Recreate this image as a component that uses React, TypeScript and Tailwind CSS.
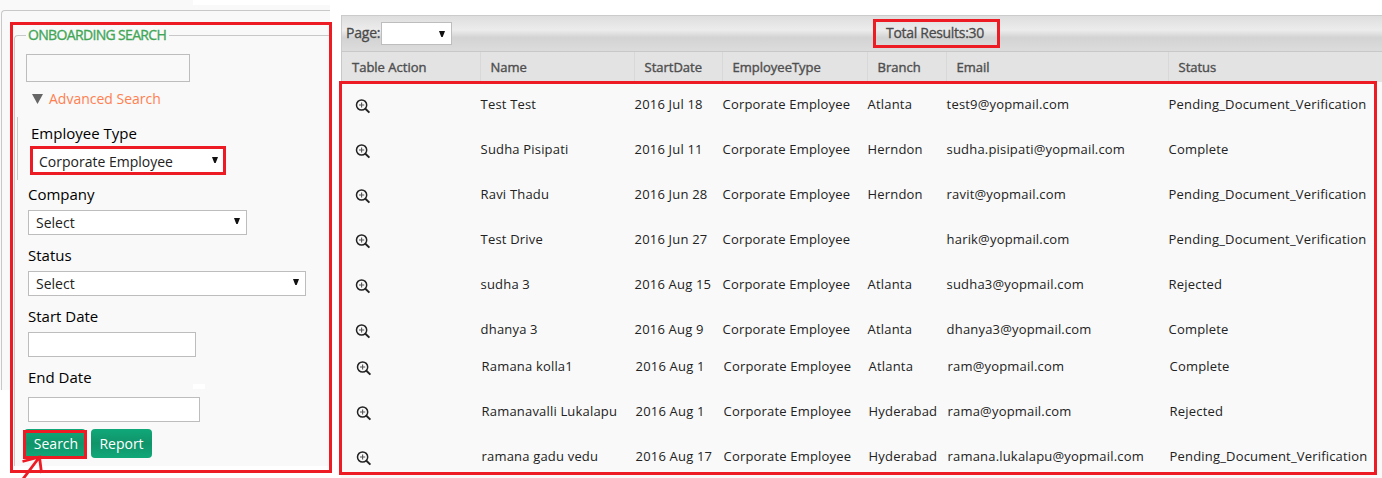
import React from "react";

type Row = {
  name: string;
  date: string;
  branch: string;
  email: string;
  status: string;
  height: string;
  offset?: string;
};

const rows: Row[] = [
  { name: "Test Test", date: "2016 Jul 18", branch: "Atlanta", email: "test9@yopmail.com", status: "Pending_Document_Verification", height: "h-[45px]" },
  { name: "Sudha Pisipati", date: "2016 Jul 11", branch: "Herndon", email: "sudha.pisipati@yopmail.com", status: "Complete", height: "h-[45px]" },
  { name: "Ravi Thadu", date: "2016 Jun 28", branch: "Herndon", email: "ravit@yopmail.com", status: "Pending_Document_Verification", height: "h-[45px]" },
  { name: "Test Drive", date: "2016 Jun 27", branch: "", email: "harik@yopmail.com", status: "Pending_Document_Verification", height: "h-[45px]" },
  { name: "sudha 3", date: "2016 Aug 15", branch: "Atlanta", email: "sudha3@yopmail.com", status: "Rejected", height: "h-[45px]" },
  { name: "dhanya 3", date: "2016 Aug 9", branch: "Atlanta", email: "dhanya3@yopmail.com", status: "Complete", height: "h-[37px]" },
  { name: "Ramana kolla1", date: "2016 Aug 1", branch: "Atlanta", email: "ram@yopmail.com", status: "Complete", height: "h-[45px]", offset: "pl-px" },
  { name: "Ramanavalli Lukalapu", date: "2016 Aug 1", branch: "Hyderabad", email: "rama@yopmail.com", status: "Rejected", height: "h-[45px]", offset: "pl-px" },
  { name: "ramana gadu vedu", date: "2016 Aug 17", branch: "Hyderabad", email: "ramana.lukalapu@yopmail.com", status: "Pending_Document_Verification", height: "h-[45px]", offset: "pl-px" },
];

const columns = "grid grid-cols-[139px_154px_88px_145px_79px_222px_214px]";
const headers = ["Table Action", "Name", "StartDate", "EmployeeType", "Branch", "Email", "Status"];

function Arrow({ className = "" }: { className?: string }) {
  return (
    <svg className={`shrink-0 ${className}`} width="6" height="6" viewBox="0 0 6 6" fill="#111">
      <path d="M0 0H6L3.7 6H2.3Z" />
    </svg>
  );
}

function ZoomIcon() {
  return (
    <svg width="16" height="16" viewBox="0 0 16 16" fill="none" stroke="#222">
      <circle cx="6.6" cy="6" r="5.1" strokeWidth="1.5" />
      <path d="M10.4 9.8L14.4 13.6" strokeWidth="2" />
      <path d="M4 6H9.2M6.6 3.4V8.6" stroke="#555" strokeWidth="1.1" />
    </svg>
  );
}

function Label({ children }: { children: React.ReactNode }) {
  return <div className="h-5 text-[15px] leading-[18px] text-black">{children}</div>;
}

function Select({ className }: { className: string }) {
  return (
    <div className={`flex h-[25px] items-center justify-between border border-[#bdbdbd] bg-white pr-[6px] pl-[7px] text-sm text-[#222] ${className}`}>
      <span className="leading-5">Select</span>
      <Arrow className="mb-[3px]" />
    </div>
  );
}

function SearchPanel() {
  return (
    <aside className="relative h-[478px] w-[341px] shrink-0">
      <div className="absolute top-0 left-0 h-[390px] w-[330px] bg-[#f9f9f9]" />
      <div className="absolute top-0 left-[193px] h-[5px] w-[148px] bg-white" />
      <div className="absolute top-[10px] left-px h-[380px] w-[329px] rounded-tl border-t border-l border-[#c8c8c8]" />
      <section className="relative ml-[14px] h-[466px] w-[316px] pt-[35px]">
        <div className="h-[431px] rounded-tl border-t border-l border-[#c8c8c8] bg-[#f9f9f9] pl-[13px]">
          <h2 className="-mt-[11px] -ml-[2px] h-5 w-[143px] bg-[#f9f9f9] pl-[2px] text-[14px] leading-5 tracking-[-0.66px] whitespace-nowrap text-[#43a657] [-webkit-text-stroke:0.35px_#43a657]">
            ONBOARDING SEARCH
          </h2>
          <div className="mt-[9px] -ml-[2px] h-[28px] w-[164px] border border-[#bdbdbd]" />
          <div className="mt-[7px] ml-[4px] flex h-5 items-center text-sm text-[#ff7f50]">
            <svg className="mr-[6px]" width="11" height="10" viewBox="0 0 11 10" fill="#666">
              <path d="M0 0H11L5.5 10Z" />
            </svg>
            <span>Advanced Search</span>
          </div>
          <div className="mt-[8px] -ml-[11px] h-[63px] border-l border-[#c8c8c8] pt-[7px] pl-[13px]">
            <Label>Employee Type</Label>
            <div className="mt-[2px] -ml-px flex h-[29px] w-[196px] items-center justify-between border-[3px] border-[#ed1c24] bg-white pr-[5px] pl-[6px] text-sm text-[#222]">
              <span className="pt-[2px] leading-5">Corporate Employee</span>
              <Arrow className="mb-px" />
            </div>
          </div>
          <div className="mt-[5px]"><Label>Company</Label></div>
          <Select className="mt-[5px] w-[219px]" />
          <div className="mt-[11px]"><Label>Status</Label></div>
          <Select className="mt-[5px] w-[278px]" />
          <div className="mt-[11px]"><Label>Start Date</Label></div>
          <div className="mt-[5px] h-[25px] w-[168px] border border-[#bdbdbd] bg-white" />
          <div className="mt-[11px]"><Label>End Date</Label></div>
          <div className="mt-[9px] h-[25px] w-[172px] border border-[#bdbdbd] bg-white" />
          <div className="mt-[7px] -ml-[4px] flex gap-[5px] text-[14px] text-white">
            <button className="h-[29px] w-[62px] rounded bg-linear-to-b from-[#10a878] via-[#10946a] to-[#10a878] pl-[2px]">Search</button>
            <button className="h-[29px] w-[61px] rounded bg-linear-to-b from-[#10a878] via-[#10946a] to-[#10a878]">Report</button>
          </div>
        </div>
      </section>
      <div className="absolute top-[384px] left-[193px] h-[5px] w-[12px] bg-white" />
      <div className="absolute top-[22px] left-[10px] h-[451px] w-[322px] border-[3px] border-[#ed1c24]" />
      <div className="absolute top-[430px] left-[23px] h-[29px] w-[64px] border-[3px] border-[#ed1c24]" />
      <svg className="absolute top-[450px] left-[18px]" width="30" height="28" viewBox="0 0 30 28" fill="none" stroke="#ed1c24" strokeWidth="2.8">
        <path d="M5 29L21.5 7M4.5 11.5L21.5 7L23.5 23" />
      </svg>
    </aside>
  );
}

function Results() {
  return (
    <main className="relative h-[478px] w-[1041px] shrink-0 pt-[15px]">
      <div className="flex h-[36px] items-center border-t border-l border-[#cbcbcb] bg-[linear-gradient(180deg,#dedede_0%,#ececec_40%,#d3d3d3_62%,#dcdcdc_100%)] pl-[4px] text-sm text-[#4a4a4a]">
        <span className="w-[35px] pb-[2px] tracking-[-0.2px] whitespace-nowrap [-webkit-text-stroke:0.3px_#4a4a4a]">Page:</span>
        <div className="flex h-[23px] w-[71px] items-center justify-end border border-[#bdbdbd] bg-white pr-[6px]">
          <Arrow />
        </div>
        <div className="ml-[421px] flex h-[29px] w-[127px] items-center justify-center border-[3px] border-[#ed1c24] pr-[3px] pb-[2px] tracking-[-0.3px] whitespace-nowrap [-webkit-text-stroke:0.3px_#4a4a4a]">
          Total Results:30
        </div>
      </div>
      <div className={`${columns} h-[31px] border-t border-l border-[#c8c8c8] bg-[#e3e3e3] text-[13px] text-[#4f4f4f]`}>
        {headers.map((h, i) => (
          <div key={h} className={`flex items-center border-r border-[#d8d8d8] pt-[2px] [-webkit-text-stroke:0.4px_#4f4f4f] ${i === 0 ? "pl-[10px]" : "pl-[9.5px]"}`}>
            {h}
          </div>
        ))}
      </div>
      <div className="h-[396px] overflow-hidden bg-[#f9f9f9] text-[13px] leading-5 tracking-[0.18px] whitespace-nowrap text-[#222]">
        {rows.map((r) => (
          <div key={r.name} className={`${columns} ${r.height} ${r.offset ?? ""} pt-[12px]`}>
            <div className="pt-[5px] pl-[14px]"><ZoomIcon /></div>
            <div className="pl-[0.6px]">{r.name}</div>
            <div className="pl-[0.6px]">{r.date}</div>
            <div className="pl-[0.6px]">Corporate Employee</div>
            <div className="pl-[0.6px]">{r.branch}</div>
            <div className="pl-[0.6px]">{r.email}</div>
            <div className="pl-[0.6px]">{r.status}</div>
          </div>
        ))}
      </div>
      <div className="absolute top-[81px] -left-[2px] h-[394px] w-[1038px] border-[3px] border-[#ed1c24]" />
    </main>
  );
}

export default function App() {
  return (
    <div className="flex h-[478px] w-[1382px] overflow-hidden bg-white font-['Open_Sans',sans-serif]">
      <SearchPanel />
      <Results />
    </div>
  );
}
